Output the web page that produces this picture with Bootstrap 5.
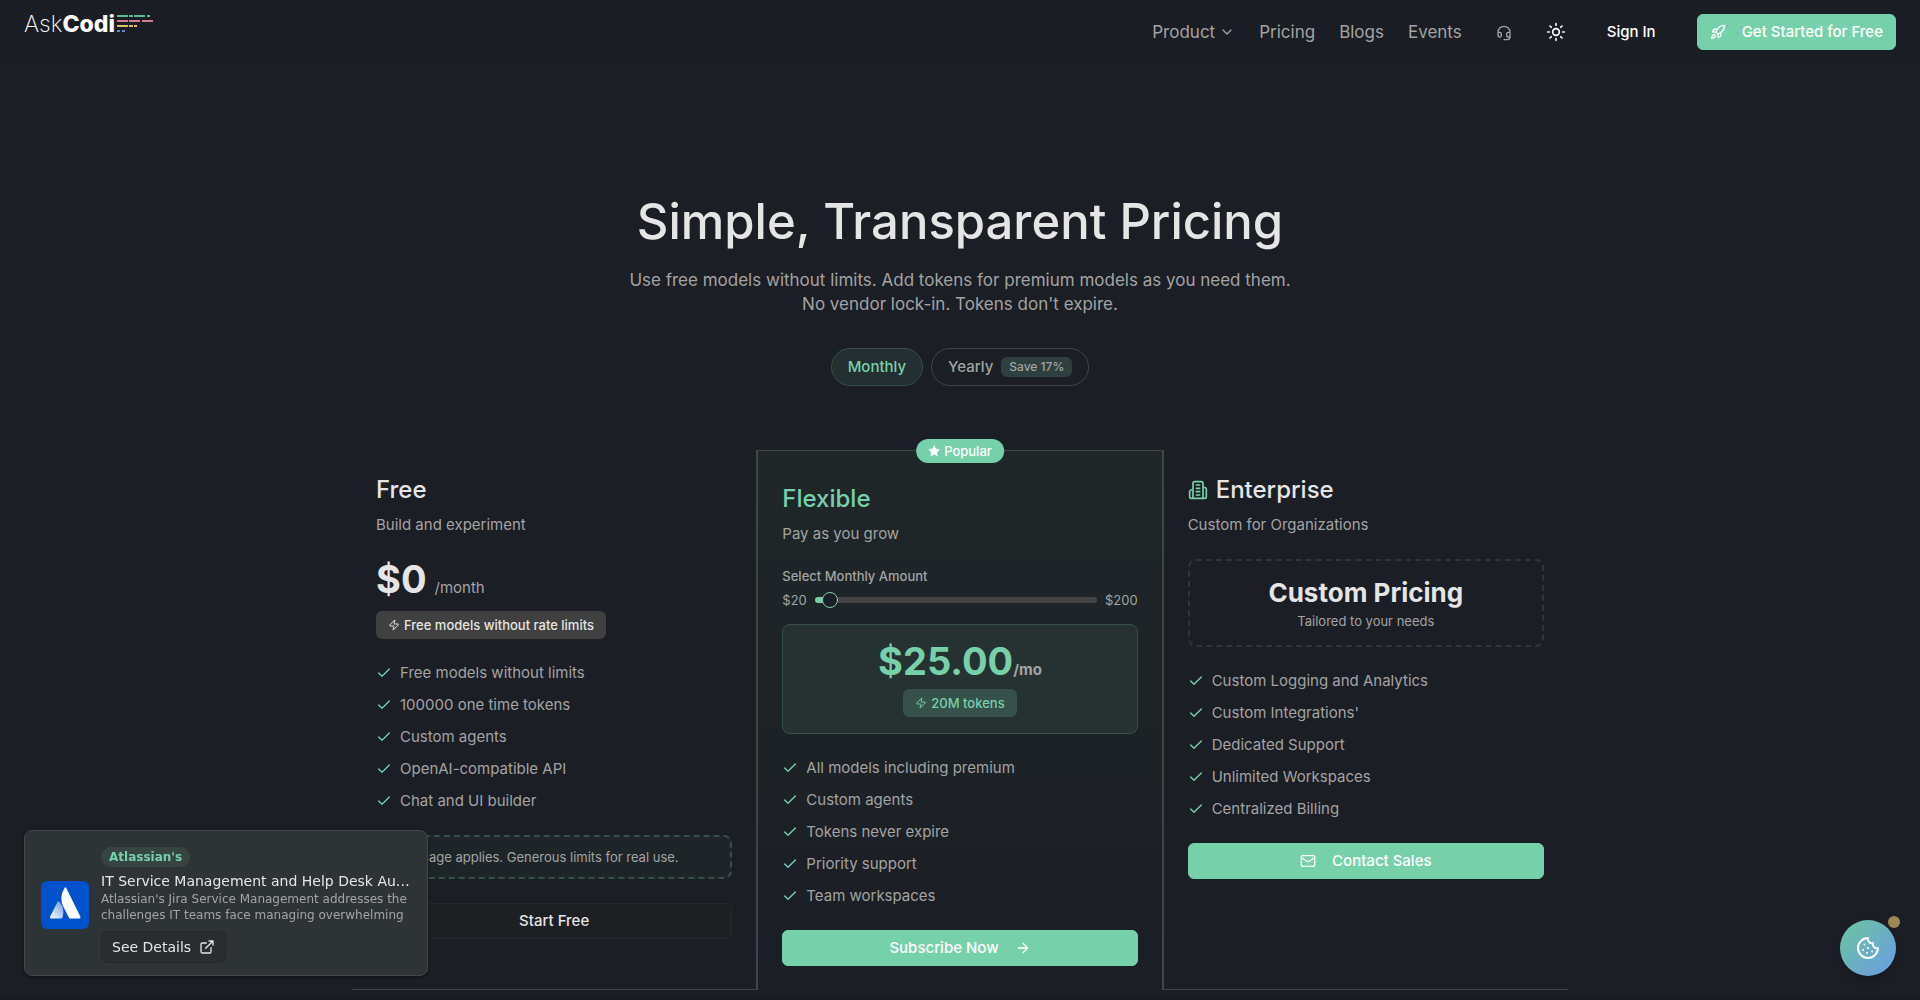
<!DOCTYPE html>
<html lang="en">
<head>
<meta charset="utf-8">
<meta name="viewport" content="width=device-width, initial-scale=1">
<title>AskCodi Pricing</title>
<link href="https://cdn.jsdelivr.net/npm/bootstrap@5.3.0/dist/css/bootstrap.min.css" rel="stylesheet">
<style>
:root{--bg:#1b1e25;--green:#76d1aa;--text:#e5e5e5;--muted:#a3a3a3;--line:#444}
body{background:var(--bg);color:var(--muted);font-family:Inter,"Liberation Sans",sans-serif;font-size:15px;line-height:20px}
svg{flex:none;fill:none;stroke:currentColor;stroke-width:2;stroke-linecap:round;stroke-linejoin:round}
h1,h2,p,ul{margin:0}
.topbar{height:64px;padding:0 24px;background:#1a1d24}
.brand{align-self:flex-start;padding-top:10px;color:#fff;font-size:23px;line-height:28px;text-decoration:none}
.brand:hover{color:#fff}
.brand .thin{font-weight:200}
.brand .heavy{font-weight:800}
.brand svg{stroke-width:2;stroke-linecap:butt;margin-left:1px}
.navlink{color:var(--muted);text-decoration:none;font-size:17px;line-height:24px}
.iconbtn{background:none;border:0;padding:0;width:36px;height:36px;color:var(--muted)}
.btn{--bs-btn-font-size:15px;--bs-btn-line-height:20px;--bs-btn-font-weight:500;--bs-btn-border-radius:6px;--bs-btn-padding-y:7px;--bs-btn-padding-x:12px;display:inline-flex;align-items:center;justify-content:center}
.btn-green{--bs-btn-bg:var(--green);--bs-btn-color:#fff;--bs-btn-border-color:var(--green);--bs-btn-hover-bg:#66c29a;--bs-btn-hover-color:#fff}
.btn-dim{--bs-btn-bg:#1e1f22;--bs-btn-color:var(--text);--bs-btn-border-color:#27282b;--bs-btn-hover-bg:#27282b;--bs-btn-hover-color:#fff}
.hero{padding-top:128px}
.hero h1{font-size:49px;line-height:60px;font-weight:500;color:var(--text);margin-bottom:16px}
.hero p{font-size:17px;line-height:24px}
.pill{border:1px solid var(--line);border-radius:19px;height:38px;padding:0 16px;background:none;color:var(--muted);font-size:15px;line-height:20px;font-weight:500}
.pill.on{background:#242f31;border-color:#35504a;color:var(--green)}
.save{background:#2d3f3f;border-radius:6px;font-size:12px;line-height:20px;padding:0 8px}
.plans{max-width:1216px;margin:64px auto 0}
.plan{padding:24px;border:0 solid var(--line);border-bottom-width:1px}
.plan.first{border-right-width:1px}
.plan.last{border-left-width:1px}
.plan.mid{position:relative;border-width:1px 1px 0;padding-top:32px;background:linear-gradient(#1f2729,var(--bg))}
.plan h2{font-size:24px;line-height:32px;font-weight:500;color:var(--text);margin-bottom:8px}
.plan.mid h2,.plan h2 svg{color:var(--green)}
.plan .sub{line-height:21px;margin-bottom:24px}
.popular{position:absolute;top:-12px;left:50%;transform:translateX(-50%);background:var(--green);color:#fff;border-radius:12px;height:24px;padding:0 12px;font-size:13px;font-weight:500}
.amount{font-size:38px;line-height:40px;font-weight:700;color:var(--text)}
.chip{background:#404040;color:var(--text);border-radius:6px;height:28px;padding:0 12px;font-size:13px;font-weight:500}
.feats{list-style:none;padding:0;margin:24px 0;row-gap:12px}
.feats li{display:flex;align-items:center;gap:8px}
.feats svg{color:var(--green)}
.fineprint{border:2px dashed #35504a;border-radius:8px;background:#1e2528;padding:12px 10px;font-size:13px;line-height:16px}
.plan .fineprint{margin-bottom:24px}
.note{font-size:13px;line-height:16px}
.pricebox{border:1px solid #35504a;border-radius:8px;background:#263232;padding:16px;margin-top:16px}
.pricebox .amount,.pricebox .chip{color:var(--green)}
.pricebox .chip{background:#36504a}
.quote{border:2px dashed #333437;border-radius:8px;padding:16px;text-align:center}
.quote strong{display:block;font-size:26px;line-height:32px;color:var(--text);margin-bottom:4px}
.slider{appearance:none;-webkit-appearance:none;height:16px;min-width:0;flex:1;margin:0;background:none}
.slider::-webkit-slider-runnable-track{height:6px;border-radius:3px;background:linear-gradient(to right,var(--green) 5%,var(--line) 5%)}
.slider::-webkit-slider-thumb{-webkit-appearance:none;width:16px;height:16px;margin-top:-5px;border-radius:50%;background:var(--bg);border:1px solid var(--green)}
.after{margin-top:8px;border-top:1px solid #17191e;height:2px}
.promo{position:fixed;left:24px;bottom:24px;width:404px;padding:16px 16px 12px;background:#2e3436;border:1px solid #444748;border-radius:8px;box-shadow:0 1px 3px #0008;font-family:"DejaVu Sans",sans-serif;font-size:12px;line-height:16px}
.promo .tag{background:#364442;color:var(--green);border-radius:10px;line-height:20px;padding:0 8px;font-weight:700}
.promo .head{color:var(--text);font-size:14px;line-height:20px;white-space:nowrap}
.promo .btn{--bs-btn-font-size:14px;--bs-btn-font-weight:400;--bs-btn-padding-y:5px;--bs-btn-padding-x:10px;--bs-btn-bg:#292d2f;--bs-btn-border-color:#25292a;font-family:inherit}
.cookie{position:fixed;right:24px;bottom:24px;width:56px;height:56px;border:0;border-radius:50%;background:linear-gradient(135deg,#6bc59c,#6a9be6);color:#fff;box-shadow:0 4px 10px #0003}
.cookie span{position:absolute;right:-4px;top:-4px;width:12px;height:12px;border-radius:50%;background:#9d8850}
</style>
</head>
<body>
<svg class="d-none" aria-hidden="true">
<symbol id="check" viewBox="0 0 24 24"><path d="M20 6 9 17l-5-5"/></symbol>
<symbol id="zap" viewBox="0 0 24 24"><path d="M4 14a1 1 0 0 1-.78-1.63l9.9-10.2a.5.5 0 0 1 .86.46l-1.92 6.02A1 1 0 0 0 13 10h7a1 1 0 0 1 .78 1.63l-9.9 10.2a.5.5 0 0 1-.86-.46l1.92-6.02A1 1 0 0 0 11 14z"/></symbol>
</svg>

<header class="topbar d-flex align-items-center justify-content-between">
  <a class="brand d-flex align-items-center" href="#"><span class="thin">Ask</span><span class="heavy">Codi</span>
    <svg width="38" height="18" viewBox="0 0 38 18"><path stroke="#62b892" d="M1 1h11M13 1h4M18 1h11M31 1h3"/><path stroke="#cf7f8d" d="M1 6h11M13 6h11M26 6h11"/><path stroke="#dfbf62" d="M1 11h11M13 11h4M18 11h3"/><path stroke="#5b8bd0" d="M1 16h3M6 16h3"/></svg>
  </a>
  <nav class="d-flex align-items-center">
    <a class="navlink d-flex align-items-center gap-1 me-4" href="#">Product <svg width="16" height="16" viewBox="0 0 24 24"><path d="m6 9 6 6 6-6"/></svg></a>
    <a class="navlink me-4" href="#">Pricing</a>
    <a class="navlink me-4" href="#">Blogs</a>
    <a class="navlink me-4" href="#">Events</a>
    <button class="iconbtn me-3" aria-label="Support"><svg width="16" height="16" viewBox="0 0 24 24"><path d="M3 11h3a2 2 0 0 1 2 2v3a2 2 0 0 1-2 2H5a2 2 0 0 1-2-2v-5a9 9 0 0 1 18 0v5a2 2 0 0 1-2 2h-1a2 2 0 0 1-2-2v-3a2 2 0 0 1 2-2h3M21 16v2a4 4 0 0 1-4 4h-5"/></svg></button>
    <button class="iconbtn text-white me-3" aria-label="Theme"><svg width="20" height="20" viewBox="0 0 24 24"><circle cx="12" cy="12" r="4"/><path d="M12 2v2M12 20v2M4.9 4.9l1.4 1.4M17.7 17.7l1.4 1.4M2 12h2M20 12h2M6.3 17.7l-1.4 1.4M19.1 4.9l-1.4 1.4"/></svg></button>
    <button class="btn text-white px-3 me-4">Sign In</button>
    <a class="btn btn-green gap-3" href="#"><svg width="16" height="16" viewBox="0 0 24 24"><path d="M4.5 16.5c-1.500 1.260-2 5-2 5s3.740-.5 5-2c.71-.84.7-2.130-.09-2.910a2.180 2.180 0 0 0-2.910-.09zM12 15l-3-3a22 22 0 0 1 2-3.950A12.880 12.880 0 0 1 22 2c0 2.720-.78 7.500-6 11a22.350 22.350 0 0 1-4 2zM9 12H4s.55-3.030 2-4c1.620-1.080 5 0 5 0M12 15v5s3.030-.55 4-2c1.080-1.620 0-5 0-5"/></svg>Get Started for Free</a>
  </nav>
</header>

<main>
  <section class="hero text-center">
    <h1>Simple, Transparent Pricing</h1>
    <p>Use free models without limits. Add tokens for premium models as you need them.<br>No vendor lock-in. Tokens don't expire.</p>
    <div class="d-flex justify-content-center gap-2 mt-4 pt-2">
      <button class="pill on">Monthly</button>
      <button class="pill d-flex align-items-center gap-2">Yearly <span class="save">Save 17%</span></button>
    </div>
  </section>

  <section class="plans row g-0">
    <article class="plan first col-4">
      <h2>Free</h2>
      <p class="sub">Build and experiment</p>
      <div class="d-flex align-items-baseline gap-2"><span class="amount">$0</span><span>/month</span></div>
      <div class="mt-2 pt-1"><span class="chip d-inline-flex align-items-center gap-1 align-top"><svg width="12" height="12"><use href="#zap"/></svg>Free models without rate limits</span></div>
      <ul class="feats d-grid">
        <li><svg width="16" height="16"><use href="#check"/></svg>Free models without limits</li>
        <li><svg width="16" height="16"><use href="#check"/></svg>100000 one time tokens</li>
        <li><svg width="16" height="16"><use href="#check"/></svg>Custom agents</li>
        <li><svg width="16" height="16"><use href="#check"/></svg>OpenAI-compatible API</li>
        <li><svg width="16" height="16"><use href="#check"/></svg>Chat and UI builder</li>
      </ul>
      <p class="fineprint">Fair usage applies. Generous limits for real use.</p>
      <button class="btn btn-dim w-100">Start Free</button>
    </article>

    <article class="plan mid col-4">
      <span class="popular d-flex align-items-center gap-1"><svg width="12" height="12" viewBox="0 0 24 24"><path fill="currentColor" d="m12 2 3.100 6.300 6.900 1-5 4.900 1.200 6.900-6.200-3.300-6.200 3.300L7 14.200 2 9.300l6.900-1z"/></svg>Popular</span>
      <h2>Flexible</h2>
      <p class="sub">Pay as you grow</p>
      <label for="amount" class="note fw-medium d-block mb-2">Select Monthly Amount</label>
      <div class="note d-flex align-items-center gap-2"><span>$20</span><input class="slider" type="range" id="amount" min="20" max="200" value="25"><span>$200</span></div>
      <div class="pricebox text-center">
        <div class="d-flex justify-content-center align-items-baseline"><span class="amount">$25.00</span><b>/mo</b></div>
        <div class="mt-2"><span class="chip d-inline-flex align-items-center gap-1 align-top"><svg width="12" height="12"><use href="#zap"/></svg>20M tokens</span></div>
      </div>
      <ul class="feats d-grid">
        <li><svg width="16" height="16"><use href="#check"/></svg>All models including premium</li>
        <li><svg width="16" height="16"><use href="#check"/></svg>Custom agents</li>
        <li><svg width="16" height="16"><use href="#check"/></svg>Tokens never expire</li>
        <li><svg width="16" height="16"><use href="#check"/></svg>Priority support</li>
        <li><svg width="16" height="16"><use href="#check"/></svg>Team workspaces</li>
      </ul>
      <button class="btn btn-green w-100 gap-3">Subscribe Now <svg width="16" height="16" viewBox="0 0 24 24"><path d="M5 12h14M12 5l7 7-7 7"/></svg></button>
    </article>

    <article class="plan last col-4">
      <h2 class="d-flex align-items-center gap-2"><svg width="20" height="20" viewBox="0 0 24 24"><path d="M6 22V4a2 2 0 0 1 2-2h8a2 2 0 0 1 2 2v18zM6 12H4a2 2 0 0 0-2 2v6a2 2 0 0 0 2 2h2M18 9h2a2 2 0 0 1 2 2v9a2 2 0 0 1-2 2h-2M10 6h4M10 10h4M10 14h4M10 18h4"/></svg>Enterprise</h2>
      <p class="sub">Custom for Organizations</p>
      <div class="quote"><strong>Custom Pricing</strong><div class="note">Tailored to your needs</div></div>
      <ul class="feats d-grid">
        <li><svg width="16" height="16"><use href="#check"/></svg>Custom Logging and Analytics</li>
        <li><svg width="16" height="16"><use href="#check"/></svg>Custom Integrations'</li>
        <li><svg width="16" height="16"><use href="#check"/></svg>Dedicated Support</li>
        <li><svg width="16" height="16"><use href="#check"/></svg>Unlimited Workspaces</li>
        <li><svg width="16" height="16"><use href="#check"/></svg>Centralized Billing</li>
      </ul>
      <button class="btn btn-green w-100 gap-3"><svg width="16" height="16" viewBox="0 0 24 24"><rect x="2" y="4" width="20" height="16" rx="2"/><path d="m22 7-9 5.700a2 2 0 0 1-2 0L2 7"/></svg>Contact Sales</button>
    </article>
  </section>
  <div class="after"></div>
</main>

<aside class="promo d-flex align-items-center">
  <svg class="me-2" width="48" height="48" viewBox="0 0 48 48" stroke="none"><defs><linearGradient id="fade" x1="1" y1="0" x2="0" y2="1"><stop stop-color="#6d9be8"/><stop offset="1" stop-color="#fff"/></linearGradient></defs><rect width="48" height="48" rx="6" fill="#0052cc" stroke="none"/><path stroke="none" fill="url(#fade)" d="M16.500 21q1-1.500 2 0 6 7 3 15.500-.5 1-1.500 1H10q-1.500-.5-.8-2z"/><path stroke="none" fill="#fff" d="M23.500 7q.8-1.300 1.800 0L39.300 35.500q.6 1.500-.8 1.900H29.500q-1.200 0-1.700-1L22 25q-4-9 1.500-18z"/></svg>
  <div class="flex-fill ms-1">
    <div class="d-flex"><span class="tag">Atlassian's</span></div>
    <div class="head mt-1">IT Service Management and Help Desk Au…</div>
    <div>Atlassian's Jira Service Management addresses the challenges IT teams face managing overwhelming</div>
    <a class="btn btn-dim mt-2 gap-2" href="#">See Details <svg width="16" height="16" viewBox="0 0 24 24"><path d="M15 3h6v6M10 14 21 3M18 13v6a2 2 0 0 1-2 2H5a2 2 0 0 1-2-2V8a2 2 0 0 1 2-2h6"/></svg></a>
  </div>
</aside>
<button class="cookie d-flex align-items-center justify-content-center" aria-label="Cookie settings"><svg width="24" height="24" viewBox="0 0 24 24"><path d="M12 2a10 10 0 1 0 10 10 4 4 0 0 1-5-5 4 4 0 0 1-5-5M8.500 8.500v.01M16 15.500v.01M12 12v.01M11 17v.01M7 14v.01"/></svg><span></span></button>
<script src="https://cdn.jsdelivr.net/npm/bootstrap@5.3.0/dist/js/bootstrap.bundle.min.js"></script>
</body>
</html>
